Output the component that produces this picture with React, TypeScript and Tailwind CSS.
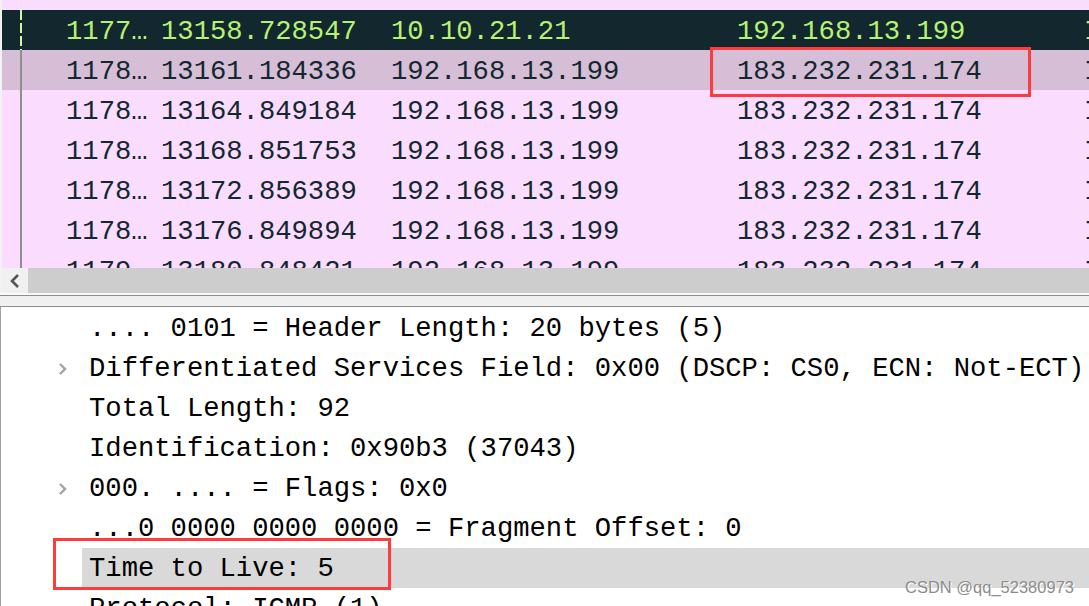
import { ReactNode } from "react";

const mono = { fontFamily: '"Liberation Mono", "DejaVu Sans Mono", monospace' };

const packets = [
  ["1177…", "13158.728547", "10.10.21.21", "192.168.13.199"],
  ["1178…", "13161.184336", "192.168.13.199", "183.232.231.174"],
  ["1178…", "13164.849184", "192.168.13.199", "183.232.231.174"],
  ["1178…", "13168.851753", "192.168.13.199", "183.232.231.174"],
  ["1178…", "13172.856389", "192.168.13.199", "183.232.231.174"],
  ["1178…", "13176.849894", "192.168.13.199", "183.232.231.174"],
  ["1179…", "13180.848421", "192.168.13.199", "183.232.231.174"],
];

const details: { text: string; arrow?: boolean; selected?: boolean }[] = [
  { text: ".... 0101 = Header Length: 20 bytes (5)" },
  { text: "Differentiated Services Field: 0x00 (DSCP: CS0, ECN: Not-ECT)", arrow: true },
  { text: "Total Length: 92" },
  { text: "Identification: 0x90b3 (37043)" },
  { text: "000. .... = Flags: 0x0", arrow: true },
  { text: "...0 0000 0000 0000 = Fragment Offset: 0" },
  { text: "Time to Live: 5", selected: true },
  { text: "Protocol: ICMP (1)" },
];

const PacketRow = ({ cols, index }: { cols: string[]; index: number }) => {
  const dark = index === 0;
  const selected = index === 1;
  const bg = dark ? "bg-[#12272e]" : selected ? "bg-[#d7bed7]" : "bg-[#fadcfe]";
  const fg = dark ? "text-[#b6f272]" : "text-[#12272e]";
  return (
    <div className={`flex h-[40px] shrink-0 items-stretch overflow-hidden ${bg} ${fg}`}>
      <div className="w-[2px] shrink-0 bg-[#f2f2f2]" />
      <div className="w-[18px] shrink-0" />
      {dark ? (
        <div className="w-[2px] shrink-0 bg-[repeating-linear-gradient(to_bottom,#d4f7a0_0px,#d4f7a0_10px,transparent_10px,transparent_13px)]" />
      ) : (
        <div className="w-[2px] shrink-0 bg-[#8e8e8e]" />
      )}
      <div className="w-[44px] shrink-0" />
      <span className="w-[95px] shrink-0 pt-[2px] leading-[40px]">{cols[0]}</span>
      <span className="w-[230px] shrink-0 pt-[2px] leading-[40px]">{cols[1]}</span>
      <span className="w-[346px] shrink-0 pt-[2px] leading-[40px]">{cols[2]}</span>
      <span className="w-[347px] shrink-0 pt-[2px] leading-[40px]">{cols[3]}</span>
      <span className="shrink-0 pt-[2px] leading-[40px]">ICMP</span>
    </div>
  );
};

const Chevron = ({ left }: { left?: boolean }): ReactNode => (
  <svg width="10" height="14" viewBox="0 0 10 14">
    {left ? (
      <path d="M8 1 L2 7 L8 13" fill="none" stroke="#555" strokeWidth="2.6" />
    ) : (
      <path d="M2 2 L7 7 L2 12" fill="none" stroke="#a3a3a3" strokeWidth="2.4" />
    )}
  </svg>
);

export default function App() {
  return (
    <div
      className="relative h-[606px] w-[1089px] overflow-hidden bg-white text-[27.2px] whitespace-pre"
      style={mono}
    >
      {/* packet list */}
      <div className="flex h-[268px] flex-col overflow-hidden">
        <div className="flex h-[10px] shrink-0 bg-[#fadcfe]">
          <div className="w-[2px] bg-[#f2f2f2]" />
        </div>
        {packets.map((p, i) => (
          <PacketRow key={i} cols={p} index={i} />
        ))}
      </div>

      {/* horizontal scrollbar */}
      <div className="flex h-[25px] border-l-2 border-[#f2f2f2]">
        <div className="flex w-[26px] items-center justify-center bg-[#f0f0f0]">
          <Chevron left />
        </div>
        <div className="flex-1 bg-[#cdcdcd]" />
      </div>
      <div className="h-[2px] bg-[#fafafa]" />
      <div className="h-[12px] border-y border-[#8a8e93] bg-[#f0f0f0]" />

      {/* details */}
      <div className="flex flex-col border-l border-[#a0a0a0] pt-[1px] text-black">
        {details.map((d, i) => (
          <div key={i} className="flex h-[40px] shrink-0">
            <div className="flex w-[81px] shrink-0 items-center pl-[57px] pt-[2px]">
              {d.arrow && <Chevron />}
            </div>
            <div className={`flex-1 pl-[7px] pt-[2px] leading-[38px] ${d.selected ? "bg-[#d9d9d9]" : ""}`}>
              {d.text}
            </div>
          </div>
        ))}
      </div>

      {/* annotation boxes */}
      <div className="absolute left-[710px] top-[47px] h-[50px] w-[321px] border-[3px] border-[#ff3b3b]" />
      <div className="absolute left-[53px] top-[538px] h-[52px] w-[338px] border-[3px] border-[#ff3b3b]" />

      {/* watermark */}
      <div
        className="absolute right-[15px] top-[577px] text-[16.5px] leading-[20px] text-[#8c8c8c] [text-shadow:1px_1px_0_#ffffff]"
        style={{ fontFamily: '"Liberation Sans", Arial, sans-serif' }}
      >
        CSDN @qq_52380973
      </div>
    </div>
  );
}
